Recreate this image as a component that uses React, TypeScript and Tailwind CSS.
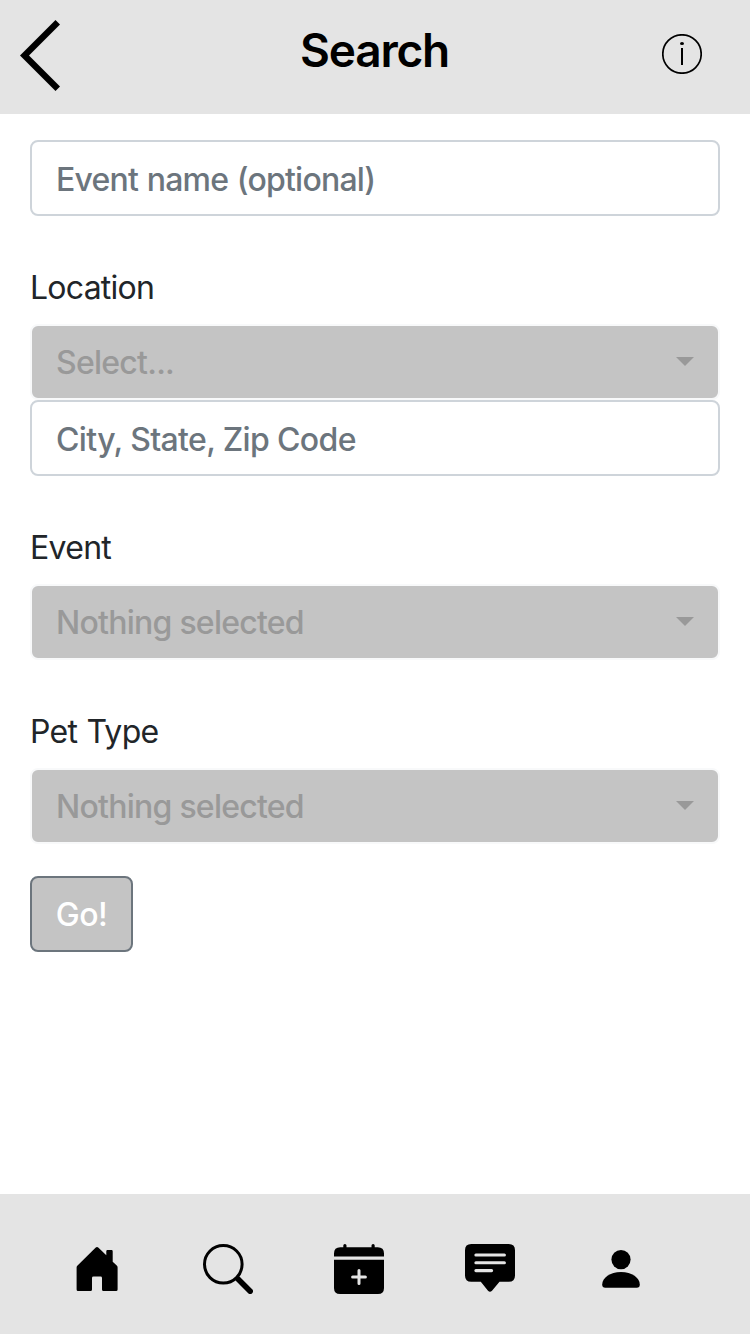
import React from "react";

function TextField({ placeholder, spacing }: { placeholder: string; spacing: string }) {
  return (
    <input
      type="text"
      aria-label={placeholder}
      placeholder={placeholder}
      className={`block h-[76px] w-full rounded-lg border-2 border-[#ced4da] bg-white px-6 pt-0.5 text-[32px] leading-[48px] font-[450] text-[#495057] outline-none placeholder:text-[#6c757d] placeholder:opacity-100 ${spacing}`}
    />
  );
}

function SelectButton({ label, spacing }: { label: string; spacing: string }) {
  return (
    <button
      type="button"
      className="flex h-[76px] w-full items-center justify-between rounded-lg border-2 border-[#f8f9fa] bg-[#c4c4c4] px-6 text-[#999999]"
    >
      <span className={`pt-0.5 text-[32px] leading-[48px] font-[450] ${spacing}`}>{label}</span>
      <svg className="-mt-[2px] h-[9px] w-[18px]" viewBox="0 0 18 9" fill="currentColor">
        <path d="M0 0h18L9 9z" />
      </svg>
    </button>
  );
}

function Label({ children, spacing }: { children: React.ReactNode; spacing: string }) {
  return <div className={`mb-3 h-12 text-[32px] leading-[48px] text-[#212529] ${spacing}`}>{children}</div>;
}

export default function App() {
  return (
    <div className="flex h-[1334px] w-[750px] flex-col bg-white font-['Inter','Liberation_Sans',sans-serif]">
      <header className="flex h-[114px] items-start justify-between bg-[#e4e4e4] pr-12 pl-5">
        <svg className="mt-5 h-[71px] w-10" viewBox="0 0 40 71">
          <path d="M35.5 0 40 4.4 9 35.4 40 66.5 35.5 71 0 35.4z" />
        </svg>
        <h1 className="mt-[22px] ml-[27px] text-[46px] leading-[56px] font-semibold tracking-[-1.2px] text-black">Search</h1>
        <svg className="mt-[34px] h-10 w-10" viewBox="0 0 40 40">
          <circle cx="20" cy="20" r="19.2" fill="none" stroke="#000" strokeWidth="1.7" />
          <ellipse cx="20" cy="9.5" rx="2" ry="1.5" />
          <path d="M19 14h2v17h-2z" />
        </svg>
      </header>

      <main className="flex flex-1 flex-col px-[30px] pt-[26px]">
        <TextField placeholder="Event name (optional)" spacing="tracking-[-0.78px] [word-spacing:0.8px]" />
        <div className="mt-12">
          <Label spacing="tracking-[-0.75px]">Location</Label>
          <SelectButton label="Select..." spacing="tracking-[-0.75px]" />
          <TextField placeholder="City, State, Zip Code" spacing="tracking-[-0.65px]" />
        </div>
        <div className="mt-12">
          <Label spacing="tracking-[-0.7px]">Event</Label>
          <SelectButton label="Nothing selected" spacing="tracking-[-0.75px]" />
        </div>
        <div className="mt-12">
          <Label spacing="tracking-[-0.7px] [word-spacing:0.8px]">Pet Type</Label>
          <SelectButton label="Nothing selected" spacing="tracking-[-0.75px]" />
        </div>
        <button
          type="button"
          className="mt-8 flex h-[76px] w-[103px] items-center justify-center rounded-lg border-2 border-[#6c757d] bg-[#c4c4c4] pt-0.5 text-[32px] leading-[48px] font-[450] tracking-[-0.5px] text-white"
        >
          Go!
        </button>
      </main>

      <nav className="flex h-[140px] items-start gap-[81px] bg-[#e4e4e4] pt-[50px] pl-[72px]">
        <svg className="h-[50px] w-[50px]" viewBox="0 0 50 50">
          <path d="M23.5 3.8Q25 2.4 26.5 3.8L34.3 11.3V7.2Q34.3 6 35.5 6H39.5Q40.7 6 40.7 7.2V17.8L45 21.8Q45.6 22.5 45.6 23.4V45.5Q45.6 47 44.1 47H31.5Q30 47 30 45.5V34Q30 32.6 28.6 32.6H21.5Q20 32.6 20 34V45.5Q20 47 18.5 47H6Q4.6 47 4.6 45.5V23.4Q4.6 22.4 5.3 21.7z" />
        </svg>
        <svg className="h-[50px] w-[50px]" viewBox="0 0 50 50" fill="none" stroke="#000">
          <circle cx="20.3" cy="20.3" r="18.8" strokeWidth="3" />
          <path d="M35 35 47.2 47.2" strokeWidth="5.6" strokeLinecap="round" />
        </svg>
        <svg className="h-[50px] w-[50px]" viewBox="0 0 50 50">
          <path d="M0 12.4V9.5Q0 3.2 6.3 3.2H9.3V1.5a1.6 1.5 0 0 1 3.2 0V3.2h25V1.5a1.6 1.5 0 0 1 3.2 0V3.2h3Q50 3.2 50 9.5v2.9z" />
          <path d="M0 15.7H50V44Q50 50 44 50H6Q0 50 0 44z" />
          <path d="M25 26.6V39.4M18.6 33H31.4" stroke="#e4e4e4" strokeWidth="3" strokeLinecap="round" />
        </svg>
        <svg className="h-[50px] w-[50px]" viewBox="0 0 50 50">
          <path d="M6.3 0H43.7Q50 0 50 6.3V31.4Q50 37.7 43.7 37.7H34.5L27 46.7Q25 49 23 46.7L15.8 37.7H6.3Q0 37.7 0 31.4V6.3Q0 0 6.3 0z" />
          <path d="M10.9 11H39.4M10.9 18.8H39.4M10.9 26.6H26.6" stroke="#e4e4e4" strokeWidth="3.1" strokeLinecap="round" />
        </svg>
        <svg className="h-[50px] w-[50px]" viewBox="0 0 50 50">
          <circle cx="25" cy="15.6" r="9.6" />
          <path d="M6.2 40.5C6.2 34 14 28 25 28S43.8 34 43.8 40.5Q43.8 43.8 40.7 43.8H9.3Q6.2 43.8 6.2 40.5z" />
        </svg>
      </nav>
    </div>
  );
}
